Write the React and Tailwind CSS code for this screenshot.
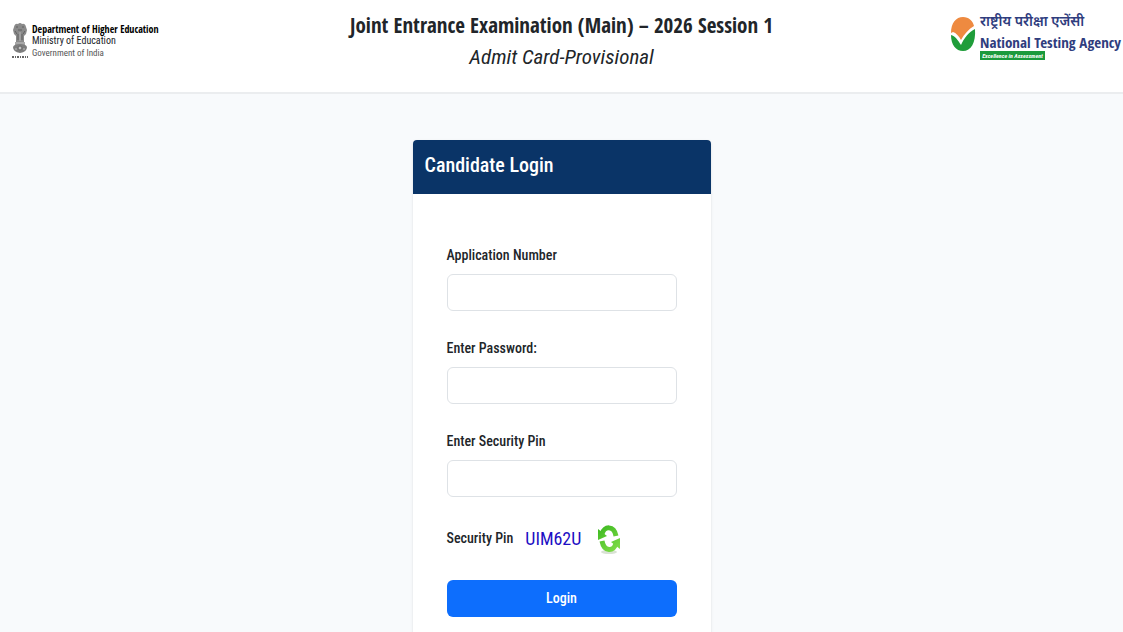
import React, { useState } from "react";

function Emblem() {
  return (
    <svg viewBox="0 0 18 38" className="h-[38px] w-[18px]" aria-hidden="true">
      {/* lion capital */}
      <path d="M3 5 Q4 1 7 2 Q9 0 11 2 Q14 1 15 5 L16 8 L15 12 L13 14 L13 20 H5 L5 14 L3 12 L2 8 Z" fill="#8a8a8a" />
      <path d="M5 5 h2 M11 5 h2 M7 8 h4 M4 9 l2 3 M14 9 l-2 3 M7 12 v6 M11 12 v6" stroke="#606060" strokeWidth="1" fill="none" />
      <path d="M9 10 v9" stroke="#b5b5b5" strokeWidth="1" />
      <rect x="4" y="20" width="10" height="3" fill="#a8a8a8" />
      <path d="M2 25 Q3 22 9 22 Q15 22 16 25 Q16 30 9 31 Q2 30 2 25 Z" fill="#7d7d7d" />
      <circle cx="9" cy="26" r="2" fill="#c4c4c4" stroke="#666" strokeWidth="1" />
      <path d="M4 27 h2 M12 27 h2" stroke="#bbb" strokeWidth="1" />
      <path d="M1 35 H17" stroke="#666" strokeWidth="2" strokeDasharray="2 1 1 1" />
    </svg>
  );
}

function NtaMark() {
  return (
    <svg viewBox="0 0 26 36" className="h-9 w-[26px]" aria-hidden="true">
      <path d="M1 17 C1 7 6 1 13 1 C19 1 23 5 24 10 C19 13 14 18 11 24 C9 20 6 17 3 16 Z" fill="#ee8a40" />
      <path d="M1 19 C5 20 8 24 11 29 C14 22 19 16 25 13 C26 27 21 35 13 35 C6 35 1 29 1 19 Z" fill="#1f9d3a" />
    </svg>
  );
}

function RefreshIcon() {
  return (
    <svg viewBox="0 0 24 30" className="h-[30px] w-6" aria-hidden="true">
      <defs>
        <linearGradient id="arrowGreen" gradientUnits="userSpaceOnUse" x1="0" y1="0" x2="24" y2="30">
          <stop offset="0" stopColor="#35b51c" />
          <stop offset="1" stopColor="#8be24e" />
        </linearGradient>
      </defs>
      <ellipse cx="12" cy="28" rx="8" ry="2" fill="#d9e2d4" />
      <path d="M5 10 C7 2 17 1 19 12" fill="none" stroke="url(#arrowGreen)" strokeWidth="5" />
      <path d="M1 5 L10 12 L1 16 Z" fill="url(#arrowGreen)" />
      <path d="M19 19 C17 28 7 28 5 17" fill="none" stroke="url(#arrowGreen)" strokeWidth="5" />
      <path d="M23 25 L14 18 L23 14 Z" fill="url(#arrowGreen)" />
    </svg>
  );
}

function Field({ id, label, type, value, onChange }) {
  return (
    <div className="mb-6">
      <label htmlFor={id} className="mb-1.5 block text-[14px] leading-[26px] font-medium">
        {label}
      </label>
      <input
        id={id}
        name={id}
        type={type}
        value={value}
        onChange={onChange}
        className="block h-[37px] w-full rounded-md border border-[#dee2e6] bg-white px-3"
      />
    </div>
  );
}

function App() {
  const [formData, setFormData] = useState({ appNo: "", password: "", pin: "" });

  const handleChange = (e) => {
    setFormData({ ...formData, [e.target.name]: e.target.value });
  };

  const handleSubmit = (e) => {
    e.preventDefault();
  };

  return (
    <div className="min-h-screen bg-[#f8fafc] text-[#212529] font-['Roboto_Condensed','Roboto',sans-serif]">
      <header className="grid h-[94px] grid-cols-[1fr_auto_1fr] items-start border-b-2 border-[#ebedef] bg-white">
        <div className="flex items-center gap-[3px] pt-[22px] pl-[11px]">
          <Emblem />
          <div className="text-[10px] leading-3">
            <p className="font-bold text-black font-['Open_Sans_Condensed','Open_Sans',sans-serif]">
              Department of Higher Education
            </p>
            <p>Ministry of Education</p>
            <p className="text-[9px] text-[#555]">Government of India</p>
          </div>
        </div>

        <div className="pt-[9px] text-center text-[21px] leading-8">
          <h1 className="font-bold font-['Open_Sans_Condensed','Open_Sans',sans-serif]">
            Joint Entrance Examination (Main) – 2026 Session 1
          </h1>
          <h2 className="italic">Admit Card-Provisional</h2>
        </div>

        <div className="flex items-start justify-end gap-1 pt-[13px] pr-0.5 whitespace-nowrap text-[#2f3d7e]">
          <div className="pt-[3px]">
            <NtaMark />
          </div>
          <div>
            <p className="text-[14px] leading-5 font-semibold font-['Noto_Sans_Devanagari','Noto_Sans',sans-serif]">राष्ट्रीय परीक्षा एजेंसी</p>
            <p className="text-[15px] leading-[18px] font-bold font-['Open_Sans_Condensed','Open_Sans',sans-serif]">
              National Testing Agency
            </p>
            <p className="w-[65px] bg-[#1b9a3c] text-center text-[6px] leading-[9px] font-bold text-white italic">
              Excellence in Assessment
            </p>
          </div>
        </div>
      </header>

      <main className="pt-[46px]">
        <section className="mx-auto w-[298px] rounded bg-white shadow-sm">
          <h2 className="h-[54px] rounded-t bg-[#0a3467] px-3 pt-[9px] text-[20px] leading-8 font-medium text-white">
            Candidate Login
          </h2>
          <form onSubmit={handleSubmit} className="px-[34px] pt-12 pb-8">
            <Field id="appNo" label="Application Number" type="text" value={formData.appNo} onChange={handleChange} />
            <Field id="password" label="Enter Password:" type="password" value={formData.password} onChange={handleChange} />
            <Field id="pin" label="Enter Security Pin" type="text" value={formData.pin} onChange={handleChange} />

            <div className="mb-6 flex h-[35px] items-center">
              <span className="text-[14px] font-medium">Security Pin</span>
              <span className="ml-3 text-[18px] text-[#1d0fc4]">UIM62U</span>
              <button type="button" aria-label="Refresh security pin" className="ml-4">
                <RefreshIcon />
              </button>
            </div>

            <button type="submit" className="h-[37px] w-full rounded-md bg-[#0d6efd] text-[14px] font-medium text-white">
              Login
            </button>
          </form>
        </section>
      </main>
    </div>
  );
}

export default App;
